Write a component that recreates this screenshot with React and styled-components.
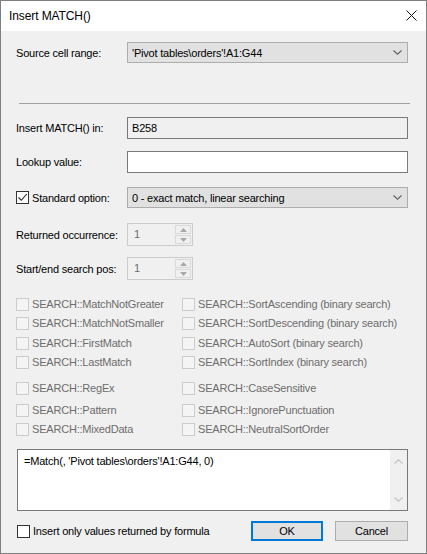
import styled, { createGlobalStyle } from 'styled-components';

const GlobalStyle = createGlobalStyle`
  html, body {
    margin: 0;
    padding: 0;
    background: #f0f0f0;
  }
  * {
    box-sizing: border-box;
  }
`;

const Chevron = ({ color = '#606060', up = false }) => (
  <svg width="9" height="5" viewBox="0 0 9 5">
    <path
      d={up ? 'M0.5 4.5 L4.5 0.8 L8.5 4.5' : 'M0.5 0.5 L4.5 4.2 L8.5 0.5'}
      fill="none"
      stroke={color}
      strokeWidth="1.1"
    />
  </svg>
);

const Triangle = ({ up }) => (
  <svg width="7" height="4" viewBox="0 0 7 4">
    <path d={up ? 'M0 4 L3.5 0 L7 4 Z' : 'M0 0 L3.5 4 L7 0 Z'} fill="#a8a8a8" />
  </svg>
);

const CheckMark = () => (
  <svg width="11" height="11" viewBox="0 0 11 11">
    <path d="M1.5 5.5 L4.3 8.3 L9.8 2" fill="none" stroke="#222" strokeWidth="1.1" />
  </svg>
);

const checks = [
  { left: 'SEARCH::MatchNotGreater', right: 'SEARCH::SortAscending (binary search)', mt: 0 },
  { left: 'SEARCH::MatchNotSmaller', right: 'SEARCH::SortDescending (binary search)', mt: 0 },
  { left: 'SEARCH::FirstMatch', right: 'SEARCH::AutoSort (binary search)', mt: 1 },
  { left: 'SEARCH::LastMatch', right: 'SEARCH::SortIndex (binary search)', mt: 0 },
  { left: 'SEARCH::RegEx', right: 'SEARCH::CaseSensitive', mt: 7 },
  { left: 'SEARCH::Pattern', right: 'SEARCH::IgnorePunctuation', mt: 3 },
  { left: 'SEARCH::MixedData', right: 'SEARCH::NeutralSortOrder', mt: 0 },
];

const SpinBox = ({ value }) => (
  <Spin>
    <SpinValue>{value}</SpinValue>
    <SpinButtons>
      <SpinButton>
        <Triangle up />
      </SpinButton>
      <SpinButton>
        <Triangle />
      </SpinButton>
    </SpinButtons>
  </Spin>
);

export default function App() {
  return (
    <>
      <GlobalStyle />
      <Window>
        <TitleBar>
          <Title>Insert MATCH()</Title>
          <CloseButton>
            <svg width="11" height="11" viewBox="0 0 11 11">
              <path d="M0.5 0.5 L10.5 10.5 M10.5 0.5 L0.5 10.5" stroke="#111" strokeWidth="1" />
            </svg>
          </CloseButton>
        </TitleBar>
        <Body>
          <Row $mt={11} $h={21}>
            <Label>Source cell range:</Label>
            <Select>
              <span>'Pivot tables\orders'!A1:G44</span>
              <Chevron />
            </Select>
          </Row>
          <Separator />
          <Row $mt={13} $h={22}>
            <Label>Insert MATCH() in:</Label>
            <TextBox $readOnly>B258</TextBox>
          </Row>
          <Row $mt={12} $h={22}>
            <Label>Lookup value:</Label>
            <TextBox />
          </Row>
          <Row $mt={14} $h={21}>
            <Label>
              <CheckBox $checked>
                <CheckMark />
              </CheckBox>
              Standard option:
            </Label>
            <Select>
              <span>0 - exact match, linear searching</span>
              <Chevron />
            </Select>
          </Row>
          <Row $mt={15} $h={23}>
            <Label>Returned occurrence:</Label>
            <SpinBox value="1" />
          </Row>
          <Row $mt={11} $h={23}>
            <Label>Start/end search pos:</Label>
            <SpinBox value="1" />
          </Row>
          <CheckGrid>
            {checks.map((c) => (
              <CheckRow key={c.left} $mt={c.mt}>
                <CheckItem>
                  <CheckBox $disabled />
                  {c.left}
                </CheckItem>
                <CheckItem>
                  <CheckBox $disabled />
                  {c.right}
                </CheckItem>
              </CheckRow>
            ))}
          </CheckGrid>
          <Formula>
            <FormulaText>=Match(, 'Pivot tables\orders'!A1:G44, 0)</FormulaText>
            <ScrollBar>
              <Chevron color="#c2c2c2" up />
              <Chevron color="#c2c2c2" />
            </ScrollBar>
          </Formula>
          <Footer>
            <FooterCheck>
              <CheckBox />
              Insert only values returned by formula
            </FooterCheck>
            <Button $primary>OK</Button>
            <Button>Cancel</Button>
          </Footer>
        </Body>
      </Window>
    </>
  );
}

const Window = styled.div`
  width: 427px;
  height: 554px;
  border: 1px solid #7f7f7f;
  background: #f0f0f0;
  display: flex;
  flex-direction: column;
  font-family: 'Liberation Sans', Arial, sans-serif;
  font-size: 11px;
  letter-spacing: -0.2px;
  color: #000;
`;

const TitleBar = styled.div`
  height: 30px;
  background: #fff;
  display: flex;
  align-items: center;
  justify-content: space-between;
  padding: 0 9px 0 8px;
`;

const Title = styled.div`
  font-size: 12px;
  letter-spacing: -0.1px;
  margin-top: -1px;
`;

const CloseButton = styled.div`
  width: 11px;
  height: 11px;
  display: flex;
  margin-top: -1px;
`;

const Body = styled.div`
  flex: 1;
  padding: 0 18px 0 15px;
  display: flex;
  flex-direction: column;
`;

const Row = styled.div`
  display: grid;
  grid-template-columns: 111px 1fr;
  align-items: center;
  margin-top: ${(p) => p.$mt}px;
  height: ${(p) => p.$h}px;
`;

const Label = styled.div`
  display: flex;
  align-items: center;
  gap: 3px;
  white-space: nowrap;
`;

const Select = styled.div`
  height: 100%;
  background: #e1e1e1;
  border: 1px solid #adadad;
  display: flex;
  align-items: center;
  justify-content: space-between;
  padding: 0 5px 0 4px;
`;

const Separator = styled.div`
  height: 1px;
  background: #a0a0a0;
  margin: 40px -2px 0 3px;
`;

const TextBox = styled.div`
  height: 100%;
  background: ${(p) => (p.$readOnly ? '#f0f0f0' : '#fff')};
  border: 1px solid #7a7a7a;
  padding: 4px 4px 0 4px;
  line-height: 12px;
`;

const CheckBox = styled.div`
  width: 13px;
  height: 13px;
  flex-shrink: 0;
  display: flex;
  align-items: center;
  justify-content: center;
  border: 1px solid ${(p) => (p.$disabled ? '#cccccc' : '#333')};
  background: ${(p) => (p.$disabled ? '#f4f4f4' : '#fff')};
`;

const Spin = styled.div`
  width: 66px;
  height: 100%;
  border: 1px solid #cccccc;
  background: #f0f0f0;
  display: flex;
  justify-content: space-between;
  padding: 1px;
`;

const SpinValue = styled.div`
  color: #6d6d6d;
  padding: 3px 0 0 5px;
  line-height: 12px;
`;

const SpinButtons = styled.div`
  width: 16px;
  display: flex;
  flex-direction: column;
  gap: 1px;
`;

const SpinButton = styled.div`
  flex: 1;
  border: 1px solid #d9d9d9;
  background: #f0f0f0;
  display: flex;
  align-items: center;
  justify-content: center;
`;

const CheckGrid = styled.div`
  margin-top: 14.5px;
  display: flex;
  flex-direction: column;
`;

const CheckRow = styled.div`
  display: grid;
  grid-template-columns: 166px 1fr;
  height: 19px;
  margin-top: ${(p) => p.$mt}px;
`;

const CheckItem = styled.div`
  display: flex;
  align-items: center;
  gap: 3px;
  color: #6d6d6d;
  white-space: nowrap;
`;

const Formula = styled.div`
  margin: 10.5px 0 0 1px;
  height: 62px;
  background: #fff;
  border: 1px solid #7a7a7a;
  display: flex;
  justify-content: space-between;
`;

const FormulaText = styled.div`
  padding: 5px 0 0 6px;
`;

const ScrollBar = styled.div`
  width: 17px;
  background: #f0f0f0;
  display: flex;
  flex-direction: column;
  align-items: center;
  justify-content: space-between;
  padding: 9px 0 8px;
`;

const Footer = styled.div`
  margin: 10px 0 0 1px;
  height: 20px;
  display: flex;
  align-items: center;
`;

const FooterCheck = styled.div`
  flex: 1;
  display: flex;
  align-items: center;
  gap: 3px;
`;

const Button = styled.div`
  width: ${(p) => (p.$primary ? 72 : 73)}px;
  height: 20px;
  margin-left: ${(p) => (p.$primary ? 0 : 12)}px;
  background: #e1e1e1;
  border: ${(p) => (p.$primary ? '2px solid #0078d7' : '1px solid #adadad')};
  display: flex;
  align-items: center;
  justify-content: center;
`;
